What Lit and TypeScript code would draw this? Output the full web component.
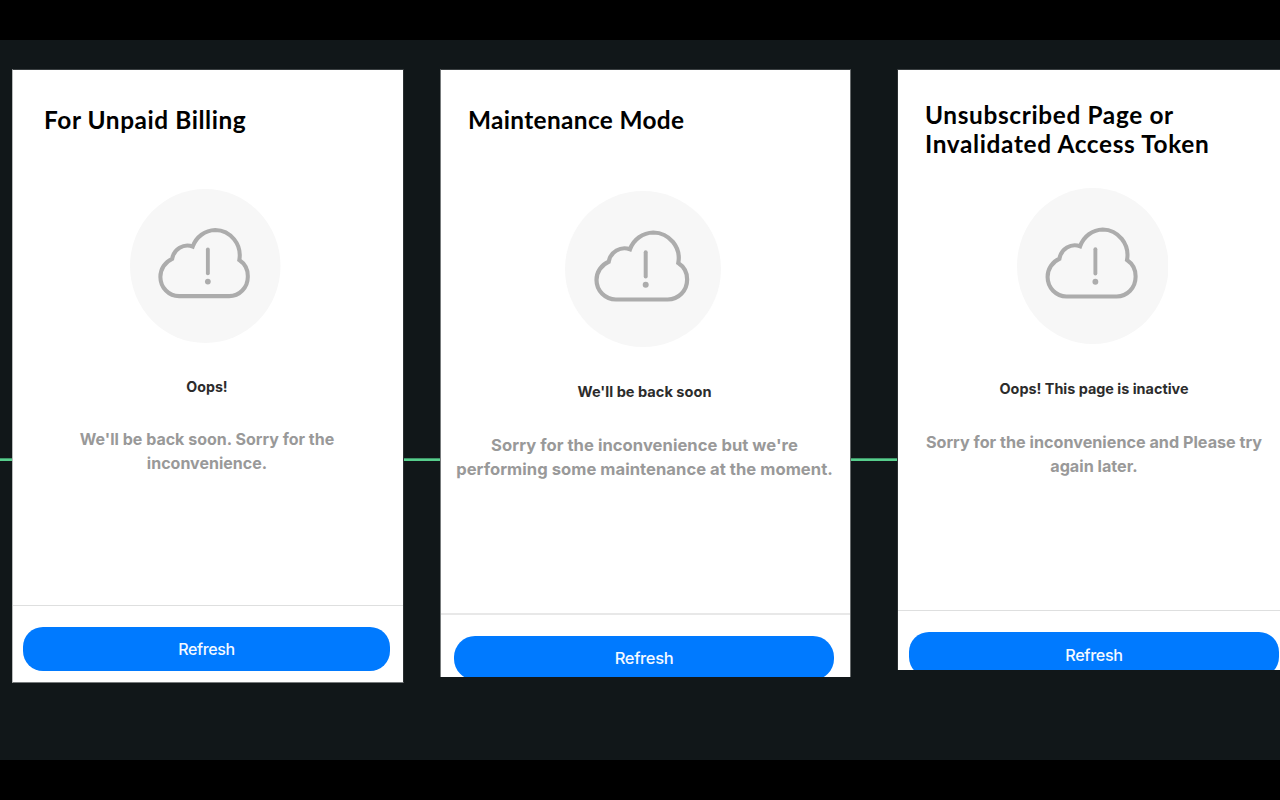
import { LitElement, html, css } from "lit";
import { customElement, property } from "lit/decorators.js";

interface Screen {
  kind: string;
  heading: string[];
  title: string;
  message: string[];
}

const SCREENS: Screen[] = [
  {
    kind: "billing",
    heading: ["For Unpaid Billing"],
    title: "Oops!",
    message: ["We'll be back soon. Sorry for the", "inconvenience."],
  },
  {
    kind: "maintenance",
    heading: ["Maintenance Mode"],
    title: "We'll be back soon",
    message: ["Sorry for the inconvenience but we're", "performing some maintenance at the moment."],
  },
  {
    kind: "inactive",
    heading: ["Unsubscribed Page or", "Invalidated Access Token"],
    title: "Oops! This page is inactive",
    message: ["Sorry for the inconvenience and Please try", "again later."],
  },
];

@customElement("cloud-alert")
export class CloudAlert extends LitElement {
  static styles = css`
    :host { display: block; }
    .art { display: block; width: 100%; height: 100%; }
  `;
  render() {
    return html`
      <svg class="art" viewBox="0 0 156 156" preserveAspectRatio="none" fill="none">
        <circle cx="78" cy="78" r="78" fill="#f7f7f7" />
        <path
          d="M51 108.5A19.4 19.4 0 0 1 31.5 89A20 20 0 0 1 43.7 70.7A16 16 0 0 1 65 58.3A25.5 25.5 0 0 1 88.3 41.5A25.8 25.8 0 0 1 113.3 72A19.6 19.6 0 0 1 122.1 89A19.4 19.4 0 0 1 102.7 108.5Z"
          stroke="#acacac" stroke-width="4.2" />
        <path d="M80.7 61.3V85.4" stroke="#acacac" stroke-width="4" stroke-linecap="round" />
        <circle cx="80.7" cy="93.8" r="3" fill="#acacac" />
      </svg>
    `;
  }
}

@customElement("status-card")
export class StatusCard extends LitElement {
  @property({ attribute: false }) screen!: Screen;

  static styles = css`
    :host { display: block; flex: none; }
    .card {
      box-sizing: border-box;
      display: flex;
      flex-direction: column;
      overflow: hidden;
      background: #fff;
      border: 0 solid #3a3f41;
      border-top-width: 1px;
      border-left-width: 1px;
      border-right-width: 1px;
      white-space: nowrap;
      font-family: Inter, "Liberation Sans", sans-serif;
    }
    .heading {
      box-sizing: border-box;
      flex: none;
      margin: 0;
      color: #000;
      font: 700 24.4px/29px Lato, "Liberation Sans", sans-serif;
    }
    .line { display: block; width: max-content; }
    .body { display: flex; flex-direction: column; align-items: center; flex: none; box-sizing: border-box; }
    .title { margin: 0; line-height: 20px; font-weight: 700; color: #2c2c2c; }
    .message { margin: 0; font-weight: 700; color: #999; }
    .message .line { margin: 0 auto; }
    .footer { flex: none; border-top: 1px solid #dedfdf; }
    .button {
      display: block;
      border: 0;
      padding: 0;
      color: #f4f9ff;
      background: #007aff;
      font-family: inherit;
      font-weight: 500;
      letter-spacing: -0.35px;
      text-align: center;
    }

    .billing { width: 392px; height: 614px; border-left-color: #b9bcbc; border-right-color: #2a2f31; border-bottom: 1px solid #777b7c; }
    .billing .heading { height: 119px; padding: 35px 0 0 31px; letter-spacing: 0.58px; }
    .billing .body { width: 388px; height: 416px; }
    .billing .icon { width: 150.5px; height: 154px; margin-left: -3px; }
    .billing .title { margin-top: 34px; font-size: 14.2px; }
    .billing .message { margin-top: 30px; font-size: 16px; line-height: 24px; letter-spacing: 0.01px; }
    .billing .button { width: 367px; height: 44px; margin: 21px 0 0 10px; border-radius: 20px; font-size: 16px; line-height: 45px; }

    .maintenance { width: 411px; height: 608px; border-left-color: #777b7c; border-right-color: #666a6b; }
    .maintenance .heading { height: 121px; padding: 35px 0 0 27px; letter-spacing: 0.35px; }
    .maintenance .body { width: 407px; height: 422px; }
    .maintenance .icon { width: 156px; height: 156px; margin-left: -3px; }
    .maintenance .title { margin-top: 35px; font-size: 14.6px; }
    .maintenance .message { margin-top: 31px; font-size: 16.6px; line-height: 24.4px; letter-spacing: 0.04px; }
    .maintenance .footer { border-top: 2px solid #e8e8e8; }
    .maintenance .button { width: 380px; height: 44px; margin: 21px 0 0 13px; border-radius: 21px; font-size: 16.5px; line-height: 44px; }

    .inactive { width: 401px; height: 601px; border-left-color: #2a2f31; }
    .inactive .heading { height: 118px; padding: 30px 0 0 27px; letter-spacing: 0.64px; }
    .inactive .body { width: 392px; height: 422px; }
    .inactive .icon { width: 151.5px; height: 156px; margin-left: -3px; }
    .inactive .title { margin-top: 35px; font-size: 14.4px; }
    .inactive .message { margin-top: 31px; font-size: 16.2px; line-height: 24.2px; letter-spacing: 0; }
    .inactive .button { width: 370px; height: 45px; margin: 21px 0 0 11px; border-radius: 20px; font-size: 16.2px; line-height: 46px; }
  `;

  render() {
    const s = this.screen;
    return html`
      <section class="card ${s.kind}">
        <h2 class="heading">${s.heading.map((t) => html`<span class="line">${t}</span>`)}</h2>
        <div class="body">
          <cloud-alert class="icon"></cloud-alert>
          <h3 class="title">${s.title}</h3>
          <p class="message">${s.message.map((t) => html`<span class="line">${t}</span>`)}</p>
        </div>
        <div class="footer"><button class="button">Refresh</button></div>
      </section>
    `;
  }
}

@customElement("app-root")
export class AppRoot extends LitElement {
  static styles = css`
    :host {
      display: block;
      box-sizing: border-box;
      width: 1280px;
      height: 800px;
      padding: 40px 0;
      overflow: hidden;
      background: #000;
    }
    .board {
      box-sizing: border-box;
      display: flex;
      align-items: flex-start;
      height: 720px;
      padding-top: 29px;
      overflow: hidden;
      background: #111719;
    }
    .link {
      box-sizing: border-box;
      flex: none;
      height: 3px;
      margin-top: 389px;
      background: #57ce8c;
      border-top: 1px solid #3f9468;
    }
    .l0 { width: 12px; }
    .l1 { width: 36px; }
    .l2 { width: 46px; }
  `;

  render() {
    return html`
      <main class="board">
        ${SCREENS.map(
          (s, i) => html`<div class="link l${i}"></div><status-card .screen=${s}></status-card>`
        )}
      </main>
    `;
  }
}
